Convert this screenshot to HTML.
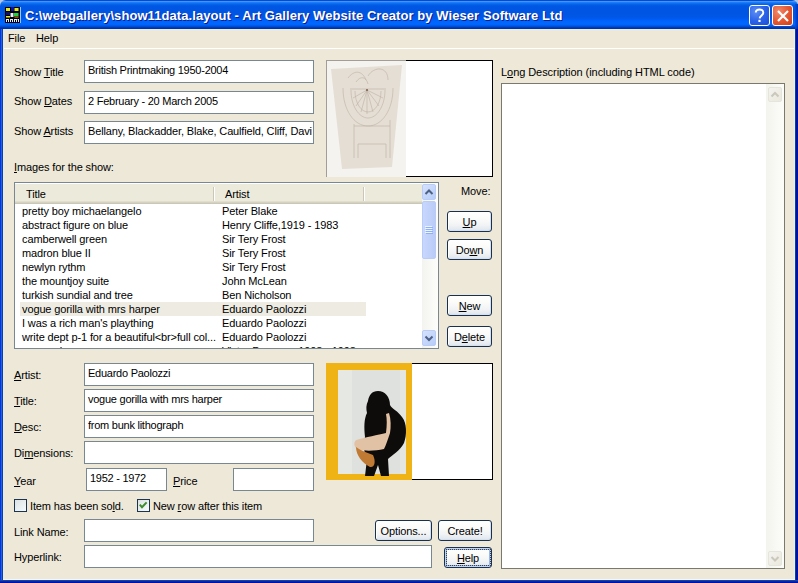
<!DOCTYPE html>
<html><head><meta charset="utf-8">
<style>
*{box-sizing:border-box;margin:0;padding:0}
html,body{width:798px;height:583px;overflow:hidden;background:#EDE8D8}
body{position:relative;font-family:"Liberation Sans",sans-serif;font-size:11px;color:#000;letter-spacing:-0.12px}
.a{position:absolute}
#title{left:0;top:0;width:798px;height:29px;border-radius:6px 6px 0 0;
background:linear-gradient(#0A48D0 0,#0A48D0 1px,#3D95FF 1px,#3D95FF 2px,#2284FB 2px,#1274F4 3px,#0767EC 4px,#035EE6 5px,#0057E3 6px,#0055E2 12px,#0056E6 17px,#005BF2 19px,#0064FC 21px,#0068FF 24px,#0061F6 25px,#0054E4 26px,#0044C8 27px,#00339F 28px,#00339F 29px)}
#frameL{left:0;top:29px;width:3px;height:554px;background:linear-gradient(90deg,#0338D8 0,#0338D8 1px,#2A5EE6 1px,#2A5EE6 2px,#1A3C90 2px)}
#frameR{left:795px;top:29px;width:3px;height:554px;background:linear-gradient(90deg,#1A3A90 0,#1A3A90 1px,#0212A0 1px)}
#frameB{left:0;top:580px;width:798px;height:3px;background:linear-gradient(#2040A0 0,#2040A0 1px,#0028B0 1px,#0028B0 2px,#0010A0 2px)}
.tb{color:#fff;font-weight:bold;font-size:13px;white-space:nowrap;letter-spacing:0.07px;text-shadow:1px 1px 0 #0A1E8C}
.l{position:absolute;white-space:nowrap;line-height:13px}
.tf{position:absolute;letter-spacing:-0.25px;background:#fff;border:1px solid #788892;white-space:nowrap;overflow:hidden;padding:0 0 0 3px;line-height:13px}
.tf span{position:relative}
.btn{position:absolute;border:1px solid #1A3050;border-radius:3px;background:linear-gradient(#FFFFFF 0,#FBFBFA 35%,#F1F3F4 70%,#E4EAF0 90%,#D8E2EC 100%);text-align:center;line-height:13px;box-shadow:inset -1px -1px 0 #D5E0EC,inset 1px 1px 0 #FFFFFF}
u{text-decoration:underline;text-decoration-thickness:1px;text-underline-offset:1px}
.row{position:absolute;white-space:nowrap;line-height:13px}
</style></head><body>
<div class="a" style="left:0;top:0;width:798px;height:8px;background:#B4C4E4"></div>
<div id="title" class="a"></div>
<div class="a" style="left:795px;top:4px;width:3px;height:25px;background:linear-gradient(90deg,#0050E4 0,#0038C4 2px,#0024A0 3px);opacity:.8"></div>
<div id="frameL" class="a"></div>
<div id="frameR" class="a"></div>
<div id="frameB" class="a"></div>
<div class="a" style="left:3px;top:29px;width:1px;height:551px;background:#D8F0FA"></div>
<div class="a" style="left:794px;top:29px;width:1px;height:551px;background:#E0F4FF"></div>
<div class="a" style="left:3px;top:579px;width:792px;height:1px;background:#F4F8FF"></div>
<div class="a" style="left:3px;top:29px;width:792px;height:1px;background:#E4EEF8"></div>

<!-- icon -->
<svg class="a" style="left:5px;top:7px" width="16" height="16" viewBox="0 0 16 16">
<rect x="0" y="0" width="15" height="16" fill="#000"/>
<rect x="1" y="1" width="4" height="3" fill="#E8E81C"/>
<rect x="6" y="0" width="3" height="4" fill="#1010A0"/>
<rect x="9.5" y="1" width="4" height="3" fill="#E8E81C"/>
<rect x="1" y="5" width="4" height="3" fill="#101070"/>
<rect x="5.5" y="6" width="3" height="4" fill="#E8F0F8"/>
<rect x="9" y="6" width="4.5" height="3.5" fill="#20D040"/>
<rect x="1" y="9" width="4" height="1.5" fill="#E8E81C"/>
<path d="M1 12h3v1h-2v2h-1zM3 13h1v2h-1zM5 12h3v1h-2v2h-1zM7 13h1v2h-1zM9 12h3v1h-2v2h-1zM11 13h1v2h-1zM12.5 12h1.5v3h-1v-2h-.5z" fill="#E8F0FF"/>
<rect x="9.5" y="9.5" width="4" height="1.5" fill="#A04010"/>
<rect x="15" y="0" width="1" height="16" fill="#8EC8F8"/>
</svg>
<div class="a tb" style="left:25px;top:8px">C:\webgallery\show11data.layout - Art Gallery Website Creator by Wieser Software Ltd</div>

<!-- help / close buttons -->
<div class="a" style="left:749px;top:5px;width:21px;height:21px;border:1px solid #fff;border-radius:3px;background:radial-gradient(circle at 30% 30%,#5C8DF4 0,#2B63E8 50%,#1A4FD8 100%)"></div>
<svg class="a" style="left:749px;top:5px" width="21" height="21" viewBox="0 0 21 21"><path d="M6.8 7.6C6.8 5.6 8.3 4.5 10.5 4.5C12.8 4.5 14.3 5.8 14.3 7.8C14.3 10.2 11 10.6 10.6 13.4" fill="none" stroke="#fff" stroke-width="1.9"/><rect x="9.4" y="14.8" width="2.2" height="2.2" fill="#fff"/></svg>
<div class="a" style="left:772px;top:5px;width:21px;height:21px;border:1px solid #fff;border-radius:3px;background:radial-gradient(circle at 30% 30%,#F08A6C 0,#E45A34 50%,#D03E16 100%)"></div>
<svg class="a" style="left:772px;top:5px" width="21" height="21" viewBox="0 0 21 21"><path d="M6 6L16 16M16 6L6 16" stroke="#fff" stroke-width="2.2"/></svg>

<!-- menu -->
<div class="l" style="left:8px;top:32px">File</div>
<div class="l" style="left:36px;top:32px">Help</div>
<div class="a" style="left:4px;top:48px;width:790px;height:1px;background:#FFFFFF"></div>

<div class="l" style="left:14px;top:66px">Show <u>T</u>itle</div>
<div class="l" style="left:14px;top:95px">Show <u>D</u>ates</div>
<div class="l" style="left:14px;top:125px">Show <u>A</u>rtists</div>
<div class="tf" style="left:84px;top:60px;width:230px;height:23px;padding-top:3px">British Printmaking 1950-2004</div>
<div class="tf" style="left:84px;top:91px;width:230px;height:23px;padding-top:3px">2 February - 20 March 2005</div>
<div class="tf" style="left:84px;top:121px;width:230px;height:23px;padding-top:3px;letter-spacing:-0.15px">Bellany, Blackadder, Blake, Caulfield, Cliff, Davi</div>

<!-- top image box -->
<div class="a" style="left:326px;top:60px;width:167px;height:117px;background:#fff;border:1px solid #000"></div>
<svg class="a" style="left:326px;top:60px" width="80" height="117" viewBox="0 0 80 117">
<rect x="0" y="0" width="80" height="117" fill="#F5F3EF"/>
<rect x="0" y="0" width="1" height="117" fill="#A09E96"/>
<rect x="0" y="0" width="80" height="1" fill="#A09E96"/>
<path d="M5 9L76 5L66 107L16 109Z" fill="#E5DED4"/>
<g fill="none" stroke="#BDB0A2" stroke-width="0.6">
<path d="M17 28C17 50 28 66 42 66C56 66 67 50 67 28"/>
<path d="M25 30C25 46 33 58 42 58C51 58 59 46 59 30"/>
<path d="M29 31C29 43 35 52 42 52C49 52 55 43 55 31"/>
<path d="M24 29H60"/>
<path d="M41 30L27 38M41 30L30 46M41 30L35 52M41 30L41 54M41 30L47 52M41 30L53 46M41 30L57 38"/>
<path d="M28 64V98M64 60V98M28 66H64M32 84V98M60 84V98M32 84H60"/>
<path d="M22 18C28 10 36 10 40 20M42 16C48 6 62 6 62 20M30 22C34 16 40 16 42 24"/>
</g>
<circle cx="41" cy="30" r="1" fill="#7A5A48"/>
</svg>

<div class="l" style="left:14px;top:161px"><u>I</u>mages for the show:</div>

<!-- listview -->
<div class="a" style="left:14px;top:182px;width:425px;height:167px;background:#fff;border:1px solid #788892;overflow:hidden">
  <div class="a" style="left:0;top:0;width:407px;height:21px;background:linear-gradient(#FFFFFF 0,#FFFFFF 1px,#EBEADB 1px,#EBEADB 18px,#E2DECD 18px,#E2DECD 19px,#D6D2C2 19px,#D6D2C2 20px,#CBC7B8 20px)"></div>
  <div class="a" style="left:198px;top:4px;width:1px;height:14px;background:#CAC7BA"></div>
  <div class="a" style="left:199px;top:4px;width:1px;height:14px;background:#fff"></div>
  <div class="a" style="left:348px;top:4px;width:1px;height:14px;background:#CAC7BA"></div>
  <div class="a" style="left:349px;top:4px;width:1px;height:14px;background:#fff"></div>
  <div class="l" style="left:11px;top:5px">Title</div>
  <div class="l" style="left:210px;top:5px">Artist</div>
  <div class="a" style="left:5px;top:119px;width:346px;height:14px;background:#EEECE2"></div>
  <div class="row" style="left:7px;top:22px">pretty boy michaelangelo</div><div class="row" style="left:207px;top:22px">Peter Blake</div>
  <div class="row" style="left:7px;top:36px">abstract figure on blue</div><div class="row" style="left:207px;top:36px">Henry Cliffe,1919 - 1983</div>
  <div class="row" style="left:7px;top:50px">camberwell green</div><div class="row" style="left:207px;top:50px">Sir Tery Frost</div>
  <div class="row" style="left:7px;top:64px">madron blue II</div><div class="row" style="left:207px;top:64px">Sir Tery Frost</div>
  <div class="row" style="left:7px;top:78px">newlyn rythm</div><div class="row" style="left:207px;top:78px">Sir Tery Frost</div>
  <div class="row" style="left:7px;top:92px">the mountjoy suite</div><div class="row" style="left:207px;top:92px">John McLean</div>
  <div class="row" style="left:7px;top:106px">turkish sundial and tree</div><div class="row" style="left:207px;top:106px">Ben Nicholson</div>
  <div class="row" style="left:7px;top:120px">vogue gorilla with mrs harper</div><div class="row" style="left:207px;top:120px">Eduardo Paolozzi</div>
  <div class="row" style="left:7px;top:134px">I was a rich man's plaything</div><div class="row" style="left:207px;top:134px">Eduardo Paolozzi</div>
  <div class="row" style="left:7px;top:148px">write dept p-1 for a beautiful&lt;br&gt;full col...</div><div class="row" style="left:207px;top:148px">Eduardo Paolozzi</div>
  <div class="row" style="left:7px;top:162px">woman in a room</div><div class="row" style="left:207px;top:162px">Victor Pasmore,1908 - 1998</div>
  <!-- scrollbar -->
  <div class="a" style="left:407px;top:1px;width:16px;height:164px;background:linear-gradient(90deg,#F3F3EF,#FDFDFB)"></div>
  <div class="a" style="left:407px;top:1px;width:14px;height:16px;border:1px solid #B9CCF7;border-radius:2px;background:linear-gradient(135deg,#D6E2FC,#B6CCF8)"></div>
  <svg class="a" style="left:407px;top:1px" width="15" height="16" viewBox="0 0 15 16"><path d="M3.5 10L7 6.5L10.5 10" fill="none" stroke="#4D6185" stroke-width="2"/></svg>
  <div class="a" style="left:407px;top:18px;width:14px;height:58px;border:1px solid #B9CCF7;border-radius:2px;background:linear-gradient(90deg,#C7D7FD,#BACBF7)"></div>
  <svg class="a" style="left:407px;top:18px" width="15" height="59" viewBox="0 0 15 59"><path d="M3 25.5h7M3 27.5h7M3 29.5h7M3 31.5h7" stroke="#EEF4FE" stroke-width="1"/><path d="M4 26.5h7M4 28.5h7M4 30.5h7M4 32.5h7" stroke="#8CB0F8" stroke-width="1"/></svg>
  <div class="a" style="left:407px;top:147px;width:14px;height:16px;border:1px solid #B9CCF7;border-radius:2px;background:linear-gradient(135deg,#D6E2FC,#B6CCF8)"></div>
  <svg class="a" style="left:407px;top:147px" width="15" height="16" viewBox="0 0 15 16"><path d="M3.5 6.5L7 10L10.5 6.5" fill="none" stroke="#4D6185" stroke-width="2"/></svg>
</div>

<div class="l" style="left:461px;top:185px">Move:</div>
<div class="btn" style="left:447px;top:211px;width:45px;height:21px;padding-top:4px"><u>U</u>p</div>
<div class="btn" style="left:447px;top:239px;width:45px;height:21px;padding-top:4px">Do<u>w</u>n</div>
<div class="btn" style="left:447px;top:295px;width:45px;height:21px;padding-top:4px"><u>N</u>ew</div>
<div class="btn" style="left:447px;top:326px;width:45px;height:21px;padding-top:4px">D<u>e</u>lete</div>

<!-- long description -->
<div class="l" style="left:501px;top:66px;letter-spacing:-0.06px">L<u>o</u>ng Description (including HTML code)</div>
<div class="a" style="left:501px;top:83px;width:284px;height:486px;background:#fff;border:1px solid #7A7970">
  <div class="a" style="left:264px;top:0;width:18px;height:484px;background:linear-gradient(90deg,#F4F4EE,#FCFCF9)"></div>
  <div class="a" style="left:266px;top:3px;width:14px;height:15px;border:1px solid #E6E5DC;border-radius:2px;background:linear-gradient(135deg,#F4F3EE,#EAE8DE)"></div>
  <svg class="a" style="left:266px;top:3px" width="14" height="15" viewBox="0 0 14 15"><path d="M3.5 9.5L7 6L10.5 9.5" fill="none" stroke="#CAC8BC" stroke-width="2"/></svg>
  <div class="a" style="left:266px;top:467px;width:14px;height:15px;border:1px solid #E6E5DC;border-radius:2px;background:linear-gradient(135deg,#F4F3EE,#EAE8DE)"></div>
  <svg class="a" style="left:266px;top:467px" width="14" height="15" viewBox="0 0 14 15"><path d="M3.5 6L7 9.5L10.5 6" fill="none" stroke="#CAC8BC" stroke-width="2"/></svg>
</div>

<!-- lower fields -->
<div class="l" style="left:14px;top:369px"><u>A</u>rtist:</div>
<div class="l" style="left:14px;top:395px"><u>T</u>itle:</div>
<div class="l" style="left:14px;top:421px"><u>D</u>esc:</div>
<div class="l" style="left:14px;top:447px">Di<u>m</u>ensions:</div>
<div class="tf" style="left:84px;top:363px;width:230px;height:23px;padding-top:3px">Eduardo Paolozzi</div>
<div class="tf" style="left:84px;top:389px;width:230px;height:23px;padding-top:3px">vogue gorilla with mrs harper</div>
<div class="tf" style="left:84px;top:415px;width:230px;height:23px;padding-top:3px">from bunk lithograph</div>
<div class="tf" style="left:84px;top:441px;width:230px;height:23px"></div>

<div class="l" style="left:14px;top:475px"><u>Y</u>ear</div>
<div class="tf" style="left:86px;top:468px;width:81px;height:23px;padding-top:3px">1952 - 1972</div>
<div class="l" style="left:173px;top:475px"><u>P</u>rice</div>
<div class="tf" style="left:233px;top:468px;width:81px;height:23px"></div>

<!-- lower image -->
<div class="a" style="left:326px;top:363px;width:167px;height:117px;background:#fff;border:1px solid #000"></div>
<svg class="a" style="left:326px;top:363px" width="86" height="117" viewBox="0 0 86 117">
<rect x="0" y="0" width="86" height="117" fill="#F0B316"/>
<rect x="12" y="7" width="68" height="104" fill="#DFE1DF"/>
<rect x="12" y="7" width="14" height="104" fill="#E6E8E4"/>
<rect x="74" y="7" width="6" height="104" fill="#E4E6E2"/>
<path d="M52 28C59 28 64 34 64 42C66 46 72 48 76 54C81 60 81 72 78 80C74 88 66 92 62 96L63 113L55 113L52 102L48 113L39 113L41 96C38 90 37 82 39 74C38 64 38 56 41 50C40 46 40 42 42 38C43 32 46 28 52 28Z" fill="#0E0C0A"/>
<path d="M63 50C65 56 65 64 64 70C62 76 60 82 58 86C50 88 40 88 33 87C28 85 27 80 30 77C40 74 52 72 60 70C61 62 61 56 60 51Z" fill="#E2C2A4"/>
<path d="M30 84C30 92 36 100 44 104C49 105 50 98 47 92C42 90 36 88 33 86Z" fill="#C07A34"/>
</svg>

<!-- checkboxes -->
<div class="a" style="left:14px;top:499px;width:13px;height:13px;border:1px solid #1D3450;background:linear-gradient(135deg,#DCE2E4,#F6FAFC)"></div>
<div class="l" style="left:30px;top:500px">Item has been so<u>l</u>d.</div>
<div class="a" style="left:137px;top:499px;width:13px;height:13px;border:1px solid #1D3450;background:linear-gradient(135deg,#DCE2E4,#F6FAFC)"></div>
<svg class="a" style="left:137px;top:499px" width="13" height="13" viewBox="0 0 13 13"><path d="M2.8 5.6L5 8.2L9.6 3.4" fill="none" stroke="#3B8C2C" stroke-width="2"/></svg>
<div class="l" style="left:153px;top:500px">New <u>r</u>ow after this item</div>

<div class="l" style="left:14px;top:526px">Link Name:</div>
<div class="l" style="left:14px;top:551px">Hyperlink:</div>
<div class="tf" style="left:84px;top:519px;width:230px;height:23px"></div>
<div class="tf" style="left:84px;top:545px;width:348px;height:23px"></div>

<div class="btn" style="left:375px;top:520px;width:57px;height:21px;padding-top:4px">Options...</div>
<div class="btn" style="left:438px;top:520px;width:54px;height:21px;padding-top:4px">Create!</div>
<div class="btn" style="left:444px;top:547px;width:48px;height:21px;padding-top:4px;box-shadow:inset 0 0 0 1px #C0D4F4,inset 0 0 0 2px #98B6EA">
  <div class="a" style="left:1px;top:1px;width:45px;height:17px;border:1px dotted #404040"></div>
  <u>H</u>elp</div>

</body></html>
